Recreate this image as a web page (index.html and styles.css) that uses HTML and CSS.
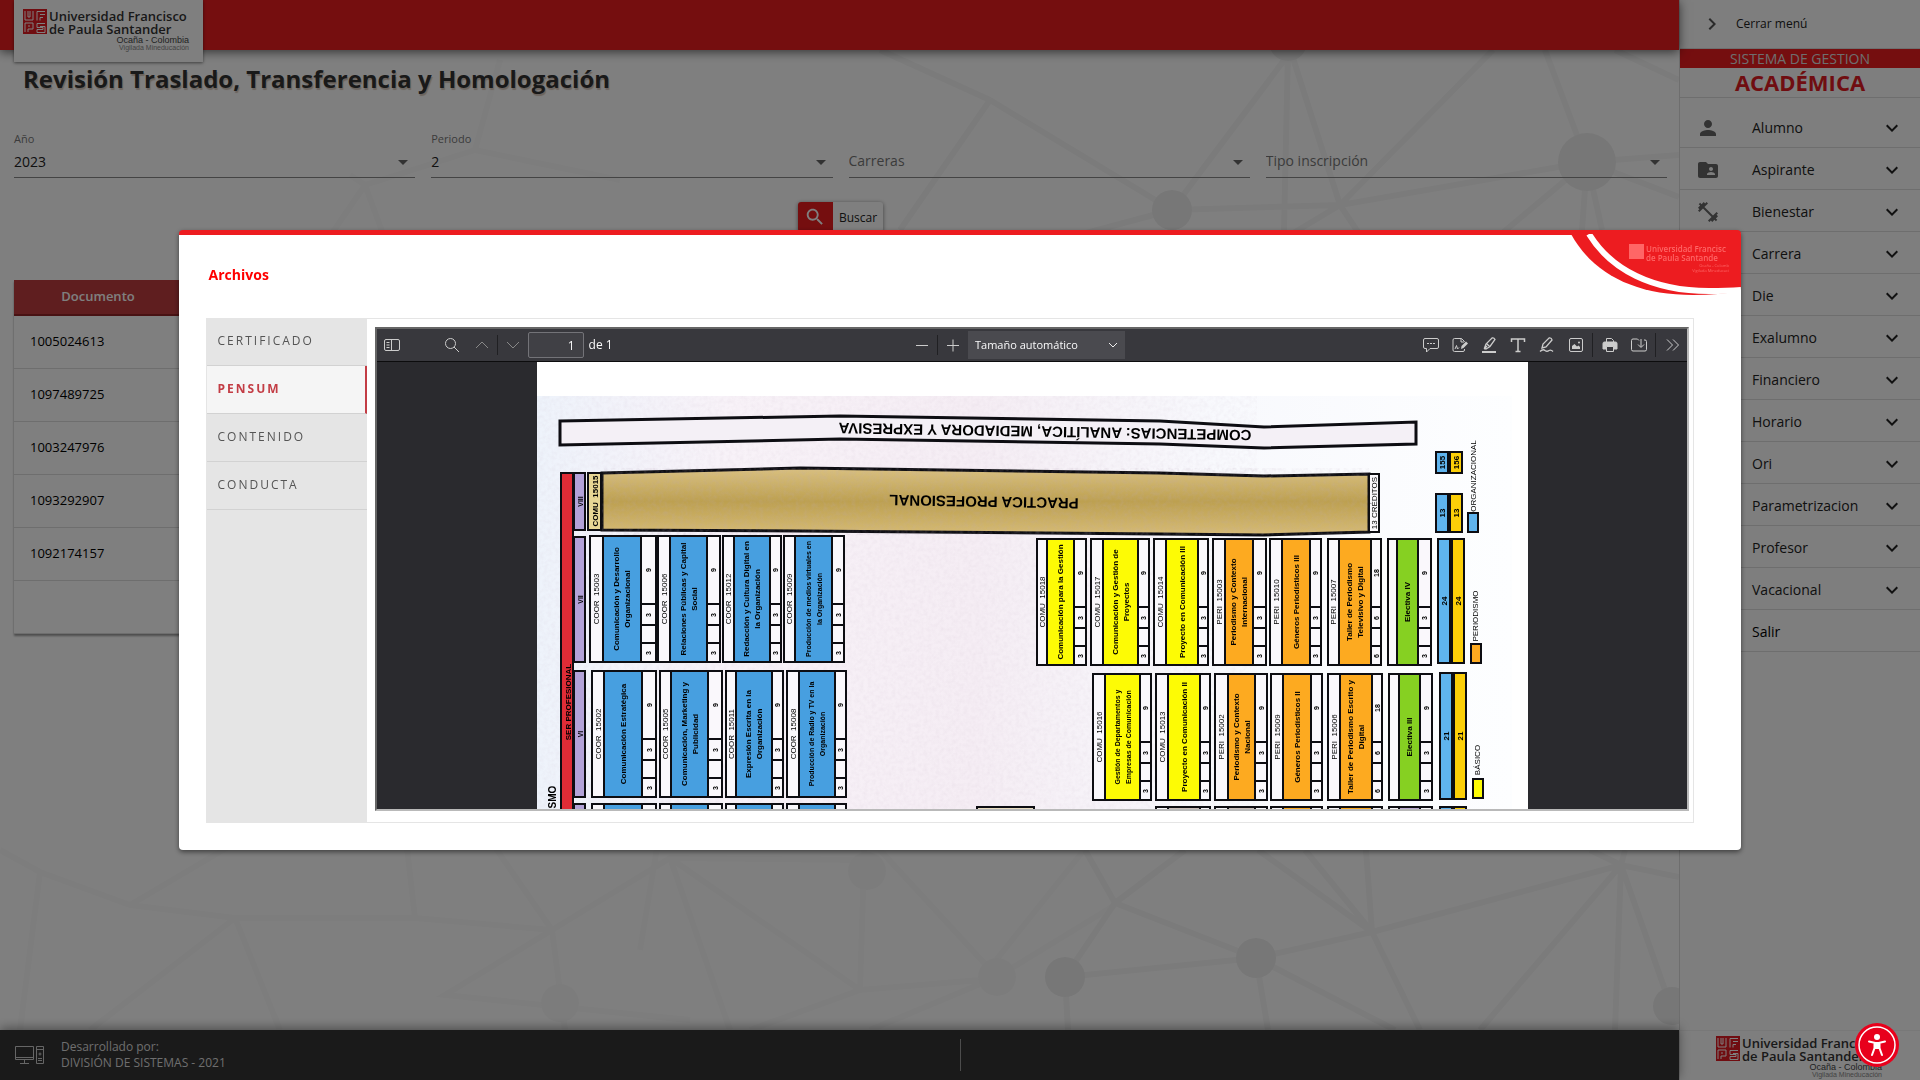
FILE: index.html
```html
<!DOCTYPE html>
<html lang="es">
<head>
<meta charset="utf-8">
<meta name="viewport" content="width=device-width, initial-scale=1">
<title>Revisión Traslado, Transferencia y Homologación</title>
<link rel="stylesheet" href="styles.css">
</head>
<body>
<svg class="defs" aria-hidden="true">
  <symbol id="chevron" viewBox="0 0 24 24"><path d="M16.59 8.59L12 13.17 7.41 8.59 6 10l6 6 6-6z"/></symbol>
  <symbol id="ufps" viewBox="0 0 24 25">
    <rect width="24" height="25" fill="#e01a22"/>
    <path d="M2 2v9h8V2M5 2v6h2V2M22 2.500h-8v9M22 5.500h-5M20 8.500h-3v3M2 23v-9h8v6H5v3M5 17h2M22 14.500h-8v4h6v2h-6v3h8v-6h-5" fill="none" stroke="#fff" stroke-width="1"/>
  </symbol>
</svg>

<div class="app">
  <div class="workspace">
    <svg class="network" viewBox="0 0 1679 1080" preserveAspectRatio="xMidYMid slice" aria-hidden="true">
      <g class="network-soft">
        <path d="M0 850L40 872 130 905 235 918 415 918 552 930 670 858 860 860M40 872L20 1030M130 905L240 840M235 918L280 1030M235 918L90 1030M415 918L405 830M552 930L490 840M552 930L565 1030M552 930L445 995 690 1020M670 858L860 990 980 980 1100 830M670 858L730 1030M860 990L865 830M860 990L750 1030M997 977L880 850M997 977L1115 905M997 977L870 1030M640 950L660 830M350 175L365 185 475 150M365 185L300 280M365 185L400 280M475 150L500 60M475 150L620 180"/>
        <circle cx="867" cy="871" r="19"/><circle cx="997" cy="977" r="19"/><circle cx="560" cy="1003" r="19"/>
      </g>
      <g class="network-strong">
        <path d="M1065 977L1256 958 1372 932 1621 865 1679 877M1115 903L1256 958M1115 903L1185 850M1115 903L1085 850M1065 977L1115 903M1065 977L1068 1030M1256 958L1268 1030M1256 958L1395 1030M1372 932L1258 850M1372 932L1305 850M1372 932L1366 850M1372 932L1420 1030M1621 865L1590 850M1621 865L1625 850M1621 865L1480 1030M1621 865L1615 1030M1621 865L1665 990"/>
        <path d="M1587 162L1545 50M1587 162L1679 155M1587 162L1679 197M1587 162L1582 230M1587 162L1602 230M1587 162L1500 235M1587 162L1340 205 1290 235M1340 205L1493 50M1340 205L1292 55M1340 205L1360 235M1615 50L1679 80M1288 50L1284 230M1172 210L1340 205M1172 210L1288 55M1172 210L990 100M1172 210L1060 240M990 100L880 50M990 100L900 230"/>
        <circle cx="1587" cy="162" r="29"/><circle cx="1288" cy="42" r="19"/><circle cx="1172" cy="210" r="20"/><circle cx="1065" cy="977" r="20"/><circle cx="1256" cy="958" r="20"/><circle cx="1672" cy="1006" r="19"/>
      </g>
    </svg>

    <header class="topbar">
      <a class="brand" href="#" aria-label="Inicio">
        <svg class="logo" viewBox="0 0 170 44">
          <use href="#ufps" width="24" height="25"/>
          <text class="logo-name" x="26" y="12">Universidad Francisco</text>
          <text class="logo-name" x="26" y="25">de Paula Santander</text>
          <text class="logo-place" x="166" y="34">Ocaña - Colombia</text>
          <text class="logo-note" x="166" y="41">Vigilada Mineducación</text>
        </svg>
      </a>
    </header>

    <main class="content">
      <h1>Revisión Traslado, Transferencia y Homologación</h1>
      <form class="filters">
        <div class="field">
          <label for="anio">Año</label>
          <select id="anio"><option>2023</option></select>
        </div>
        <div class="field">
          <label for="periodo">Periodo</label>
          <select id="periodo"><option>2</option></select>
        </div>
        <div class="field">
          <select id="carreras" class="placeholder" aria-label="Carreras"><option>Carreras</option></select>
        </div>
        <div class="field">
          <select id="tipo" class="placeholder" aria-label="Tipo inscripción"><option>Tipo inscripción</option></select>
        </div>
        <button class="search" type="button">
          <span class="search-icon"><svg viewBox="0 0 24 24" aria-hidden="true"><path d="M15.500 14h-.79l-.28-.27C15.410 12.590 16 11.110 16 9.500 16 5.910 13.090 3 9.500 3S3 5.910 3 9.500 5.910 16 9.500 16c1.610 0 3.090-.59 4.230-1.570l.27.28v.79l5 4.990L20.490 19l-4.990-5zm-6 0C7.010 14 5 11.990 5 9.500S7.010 5 9.500 5 14 7.010 14 9.500 11.990 14 9.500 14z"/></svg></span>
          <span class="search-text">Buscar</span>
        </button>
      </form>
      <table class="records">
        <thead><tr><th>Documento</th><th class="rest"></th></tr></thead>
        <tbody>
          <tr><td>1005024613</td><td></td></tr>
          <tr><td>1097489725</td><td></td></tr>
          <tr><td>1003247976</td><td></td></tr>
          <tr><td>1093292907</td><td></td></tr>
          <tr><td>1092174157</td><td></td></tr>
          <tr><td></td><td></td></tr>
        </tbody>
      </table>
    </main>

    <footer class="footer">
      <div class="credits">
        <svg viewBox="0 0 30 20" aria-hidden="true"><path d="M.5 1.500h18v13H.5zM.5 12.500h18M9.500 15v3M5 18.500h9M21.500 1.500h7v17h-7zM21.500 4.500h7M23 15.500h4M23 13.500h4"/><circle cx="25" cy="9" r="1"/></svg>
        <p>Desarrollado por:<br>DIVISIÓN DE SISTEMAS - 2021</p>
      </div>
      <div class="footer-side"></div>
    </footer>
  </div>

  <aside class="sidebar">
    <button class="close-menu" type="button"><svg viewBox="0 0 24 24" aria-hidden="true"><path d="M8.590 16.590L13.170 12 8.590 7.410 10 6l6 6-6 6z"/></svg>Cerrar menú</button>
    <p class="system">SISTEMA DE GESTION</p>
    <p class="module">ACADÉMICA</p>
    <nav class="menu">
      <button type="button"><svg class="lead" viewBox="0 0 24 24"><path d="M12 12c2.210 0 4-1.790 4-4s-1.790-4-4-4-4 1.790-4 4 1.790 4 4 4zm0 2c-2.670 0-8 1.340-8 4v2h16v-2c0-2.660-5.330-4-8-4z"/></svg>Alumno<svg class="more"><use href="#chevron"/></svg></button>
      <button type="button"><svg class="lead" viewBox="0 0 24 24"><path d="M20 6h-8l-2-2H4c-1.100 0-1.990.9-1.990 2L2 18c0 1.100.9 2 2 2h16c1.100 0 2-.9 2-2V8c0-1.100-.9-2-2-2zm-5 3c1.100 0 2 .9 2 2s-.9 2-2 2-2-.9-2-2 .9-2 2-2zm4 8h-8v-1c0-1.330 2.670-2 4-2s4 .67 4 2v1z"/></svg>Aspirante<svg class="more"><use href="#chevron"/></svg></button>
      <button type="button"><svg class="lead" viewBox="0 0 24 24"><path d="M20.570 14.860L22 13.430 20.570 12 17 15.570 8.430 7 12 3.430 10.570 2 9.140 3.430 7.710 2 5.570 4.140 4.140 2.710 2.710 4.140l1.430 1.430L2 7.710l1.430 1.430L2 10.570 3.430 12 7 8.430 15.570 17 12 20.570 13.430 22l1.430-1.430L16.290 22l2.140-2.140 1.430 1.430 1.430-1.430-1.430-1.430L22 16.290z"/></svg>Bienestar<svg class="more"><use href="#chevron"/></svg></button>
      <button type="button"><span class="lead"></span>Carrera<svg class="more"><use href="#chevron"/></svg></button>
      <button type="button"><span class="lead"></span>Die<svg class="more"><use href="#chevron"/></svg></button>
      <button type="button"><span class="lead"></span>Exalumno<svg class="more"><use href="#chevron"/></svg></button>
      <button type="button"><span class="lead"></span>Financiero<svg class="more"><use href="#chevron"/></svg></button>
      <button type="button"><span class="lead"></span>Horario<svg class="more"><use href="#chevron"/></svg></button>
      <button type="button"><span class="lead"></span>Ori<svg class="more"><use href="#chevron"/></svg></button>
      <button type="button"><span class="lead"></span>Parametrizacion<svg class="more"><use href="#chevron"/></svg></button>
      <button type="button"><span class="lead"></span>Profesor<svg class="more"><use href="#chevron"/></svg></button>
      <button type="button"><span class="lead"></span>Vacacional<svg class="more"><use href="#chevron"/></svg></button>
      <button type="button" class="exit"><span class="lead"></span>Salir</button>
    </nav>
    <div class="sidebar-logo">
      <svg class="logo" viewBox="0 0 170 44">
        <use href="#ufps" width="24" height="25"/>
        <text class="logo-name" x="26" y="12">Universidad Francisco</text>
        <text class="logo-name" x="26" y="25">de Paula Santander</text>
        <text class="logo-place" x="166" y="34">Ocaña - Colombia</text>
        <text class="logo-note" x="166" y="41">Vigilada Mineducación</text>
      </svg>
    </div>
  </aside>
</div>

<div class="backdrop">
  <section class="dialog" role="dialog" aria-labelledby="dialog-title">
    <svg class="corner" viewBox="0 0 172 64" aria-hidden="true">
      <path d="M2 0C24 40 66 61 124 61Q150 61 172 57V0z" fill="#ed1c20"/>
      <path d="M20 0C42 36 84 57 140 57Q158 57 172 56" fill="none" stroke="#fff" stroke-width="6"/>
      <g class="corner-logo">
        <rect x="60" y="10" width="15" height="15"/>
        <text x="77" y="18" class="corner-name">Universidad Francisc</text>
        <text x="77" y="27" class="corner-name">de Paula Santande</text>
        <text x="160" y="33" class="corner-note">Ocaña - Colomb</text>
        <text x="160" y="38" class="corner-note">Vigilada Mineducaci</text>
      </g>
    </svg>
    <h2 id="dialog-title">Archivos</h2>
    <div class="files">
      <div class="tabs" role="tablist">
        <button type="button" role="tab">CERTIFICADO</button>
        <button type="button" role="tab" class="active" aria-selected="true">PENSUM</button>
        <button type="button" role="tab">CONTENIDO</button>
        <button type="button" role="tab">CONDUCTA</button>
      </div>
      <div class="viewer">
        <div class="toolbar">
          <div class="tools tools-left">
            <button type="button" class="tool panel" aria-label="Panel lateral"><svg viewBox="0 0 16 16"><path d="M2 2.500h12q1.500 0 1.500 1.500v8q0 1.500-1.500 1.500H2Q.5 13.500.5 12V4Q.5 2.500 2 2.500zM7.500 2.500v11M2.500 5.500h3M2.500 8h3M2.500 10.500h3"/></svg></button>
            <button type="button" class="tool" aria-label="Buscar"><svg viewBox="0 0 16 16"><circle cx="6.500" cy="6.500" r="5"/><path d="M10 10l5 5"/></svg></button>
            <button type="button" class="tool dim" aria-label="Anterior"><svg viewBox="0 0 16 16"><path d="M2 11l6-6 6 6"/></svg></button>
            <span class="sep"></span>
            <button type="button" class="tool dim" aria-label="Siguiente"><svg viewBox="0 0 16 16"><path d="M2 5l6 6 6-6"/></svg></button>
            <input class="page-number" type="text" value="1" aria-label="Página">
            <span class="page-count">de 1</span>
          </div>
          <div class="tools tools-zoom">
            <button type="button" class="tool" aria-label="Reducir"><svg viewBox="0 0 16 16"><path d="M2 8.500h12"/></svg></button>
            <span class="sep"></span>
            <button type="button" class="tool" aria-label="Aumentar"><svg viewBox="0 0 16 16"><path d="M2 8.500h12M8 2.500v12"/></svg></button>
            <span class="scale"><select aria-label="Tamaño"><option>Tamaño automático</option></select><svg viewBox="0 0 16 16" aria-hidden="true"><path d="M4 6l4 4 4-4"/></svg></span>
          </div>
          <div class="tools tools-right">
            <button type="button" class="tool" aria-label="Comentar"><svg viewBox="0 0 16 16"><path d="M2 1.500h12q1.500 0 1.500 1.500v7q0 1.500-1.500 1.500H7l-3.500 3.500v-3.500H2Q.5 11.500.5 10V3Q.5 1.500 2 1.500zM4 6.500h2M7 6.500h2M10 6.500h2"/></svg></button>
            <button type="button" class="tool" aria-label="Firmar"><svg viewBox="0 0 16 16"><path d="M12.500 5V4.500l-3-3H2.500q-1.500 0-1.500 1.500v10q0 1.500 1.500 1.500h8.500q1.500 0 1.500-1.500v-1M9 1.500V5h3M3 12l1.500-3.500 1 3.500 1.500-1.500"/><path d="M9 12l.5-3 4.500-4.500 2 2L11.500 11z" fill="currentColor" stroke="none"/></svg></button>
            <button type="button" class="tool" aria-label="Resaltar"><svg viewBox="0 0 16 16"><path d="M1 15h14" stroke-width="2"/><path d="M3 12l3-3M5 12l-1.500-1 1.500-4 6-6q2-.5 3 1.500l-5 7zM6 7l3 3" stroke-width="1.300"/></svg></button>
            <button type="button" class="tool" aria-label="Texto"><svg viewBox="0 0 16 16"><path d="M1.500 5V2h13v3M8 2v12.500M5.500 14.500h5" stroke-width="1.500"/></svg></button>
            <button type="button" class="tool" aria-label="Dibujar"><svg viewBox="0 0 16 16"><path d="M3 11l1-4 6-6q2.500-.5 3 2l-6 7zM1 14.500q3-3 5-1 2 1.500 4 0 2-1 4 1" stroke-width="1.300"/></svg></button>
            <button type="button" class="tool" aria-label="Imagen"><svg viewBox="0 0 16 16"><rect x="1.500" y="1.500" width="13" height="13" rx="1.500"/><path d="M4 12V9l2.500-2L9 9.500l1.500-1L12 10v2z" fill="currentColor" stroke="none"/><circle cx="11" cy="5.500" r="1" fill="currentColor" stroke="none"/></svg></button>
            <span class="sep"></span>
            <button type="button" class="tool" aria-label="Imprimir"><svg viewBox="0 0 16 16"><path d="M4.500 5V1.500h5l2 2V5M4.500 9.500h7v5h-7z"/><path d="M2.500 5h11Q15 5 15 6.500V12h-3V9H4v3H1V6.500Q1 5 2.500 5z" fill="currentColor"/></svg></button>
            <button type="button" class="tool" aria-label="Guardar"><svg viewBox="0 0 16 16"><path d="M8 3.500L6.500 2H2Q.5 2 .5 3.500v9Q.5 14 2 14h12q1.500 0 1.500-1.500v-8Q15.500 3 14 3h-1M10 2v8M7 7.500l3 3 3-3"/></svg></button>
            <span class="sep"></span>
            <button type="button" class="tool" aria-label="Más"><svg viewBox="0 0 16 16"><path d="M2 2.500L7.500 8 2 13.500M8 2.500L13.500 8 8 13.500"/></svg></button>
          </div>
        </div>
        <div class="sheet">
          <svg id="pensum" viewBox="537 362 991 447" role="img" aria-label="Pensum"></svg>
        </div>
      </div>
    </div>
  </section>
</div>

<button class="accessibility" type="button" aria-label="Accesibilidad">
  <svg viewBox="0 0 44 44"><circle cx="22" cy="22" r="18" fill="none" stroke="#fff" stroke-width="1.500"/><circle cx="22" cy="14" r="3" fill="#fff"/><path d="M14 18.500l5.500 1.200v5.300l-2.500 7M30 18.500l-5.500 1.200v5.300l2.500 7" fill="none" stroke="#fff" stroke-width="2" stroke-linecap="round"/><path d="M19 19h6v7h-6z" fill="#fff"/></svg>
</button>
<script src="pensum.js"></script>
</body>
</html>
```
FILE: styles.css
```css
* { box-sizing: border-box; }

body {
  margin: 0;
  background: #fff;
  color: #222;
  font: 14px/20px "Open Sans", "Noto Sans", sans-serif;
}

button, select, input { font: inherit; color: inherit; }
button { border: 0; background: none; padding: 0; text-align: left; }
h1, h2, p { margin: 0; }
.defs { position: absolute; width: 0; height: 0; }

.app { display: flex; min-height: 100vh; }
.workspace { position: relative; flex: 1; display: flex; flex-direction: column; min-width: 0; }

.network { position: absolute; inset: 0; width: 100%; height: 100%; }
.network path { fill: none; stroke-width: 6; }
.network-soft path { stroke: #fbfbfb; }
.network-soft circle { fill: #f9f9f9; }
.network-strong path { stroke: #f7f7f7; }
.network-strong circle { fill: #efefef; }

.topbar {
  position: relative;
  height: 50px;
  padding-left: 14px;
  background: #ea1c1f;
  box-shadow: 0 2px 10px rgba(0, 0, 0, .6);
}
.brand {
  display: block;
  width: 189px;
  height: 62px;
  padding: 9px 9px 0;
  background: #fff;
  box-shadow: 0 1px 3px rgba(0, 0, 0, .5);
}
.logo { display: block; width: 170px; height: 44px; }
.logo-name { font-size: 13px; font-weight: 600; fill: #333; }
.logo-place { font: 9px "Liberation Sans", sans-serif; fill: #444; text-anchor: end; }
.logo-note { font: 7px "Liberation Sans", sans-serif; fill: #888; text-anchor: end; }

.content { position: relative; flex: 1; padding: 13px 12px 0 14px; }
h1 {
  padding: 0 9px;
  font-size: 24px;
  line-height: 32px;
  font-weight: 700;
  color: #333;
  text-shadow: 1px 2px 1px #d8c8bc;
}

.filters {
  display: grid;
  grid-template-columns: repeat(4, 1fr);
  column-gap: 16px;
  margin-top: 34px;
}
.field {
  position: relative;
  display: flex;
  flex-direction: column;
  justify-content: flex-end;
  height: 49px;
  border-bottom: 1px solid #888;
}
.field label { font-size: 11px; line-height: 20px; color: #777; }
.field select {
  width: 100%;
  height: 30px;
  padding: 0 20px 2px 0;
  border: 0;
  appearance: none;
  background: none;
}
.field::after {
  content: "";
  position: absolute;
  right: 7px;
  bottom: 12px;
  border: 5px solid transparent;
  border-top-color: #666;
  border-bottom: 0;
}
.field .placeholder { color: #777; }
.search {
  grid-column: 1 / -1;
  justify-self: center;
  display: flex;
  height: 30px;
  margin-top: 24px;
  border-radius: 3px;
  overflow: hidden;
  background: #fff;
  box-shadow: 0 1px 4px rgba(0, 0, 0, .5);
}
.search-icon { display: grid; place-items: center; width: 35px; background: #ea1c1f; }
.search-icon svg { width: 22px; height: 22px; fill: #fff; }
.search-text { padding: 0 6px; font-size: 12px; line-height: 32px; }

.records {
  width: 100%;
  margin-top: 48px;
  border-collapse: separate;
  border-spacing: 0;
  table-layout: fixed;
  box-shadow: 0 2px 2px rgba(0, 0, 0, .4);
}
.records th {
  width: 168px;
  height: 36px;
  padding: 0 0 2px;
  background: #be3c3f;
  border-bottom: 2px solid #902526;
  color: #fff;
  font-size: 13px;
  line-height: 20px;
  font-weight: 600;
}
.records th.rest { width: auto; }
.records td { height: 53px; padding: 0 16px 2px; border-bottom: 1px solid #dcdcdc; font-size: 13px; color: #000; }

.footer {
  position: relative;
  display: grid;
  grid-template-columns: 960px 1fr;
  height: 50px;
  padding: 9px 0;
  background: #343434;
  box-shadow: 0 -2px 10px rgba(0, 0, 0, .4);
  color: #ddd;
}
.credits { display: flex; align-items: center; gap: 16px; padding-left: 15px; font-size: 12px; line-height: 16px; }
.credits svg { width: 30px; height: 20px; fill: none; stroke: #ccc; }
.footer-side { border-left: 1px solid #999; }

.sidebar {
  display: flex;
  flex-direction: column;
  flex: 0 0 241px;
  border-left: 1px solid #dcdcdc;
  background: #fcfcfc;
}
.close-menu { display: flex; align-items: center; gap: 12px; height: 49px; padding-left: 20px; font-size: 12px; border-bottom: 1px solid #dcdcdc; }
.close-menu svg { width: 24px; height: 24px; fill: #555; }
.system { background: #ea1c1f; color: #ddd; font-size: 14px; line-height: 19px; text-align: center; }
.module { height: 30px; border-bottom: 1px solid #dcdcdc; color: #e01a22; font-size: 22px; line-height: 28px; font-weight: 700; text-align: center; }
.menu { display: flex; flex-direction: column; padding-top: 8px; }
.menu button { display: flex; align-items: center; height: 42px; padding: 2px 16px 0; border-bottom: 1px solid #dcdcdc; }
.lead { width: 24px; height: 24px; margin-right: 32px; fill: #666; }
.more { width: 24px; height: 24px; margin-left: auto; fill: #222; }
.menu .exit { color: #000; }
.sidebar-logo { height: 50px; margin-top: auto; padding: 5px 0 0 36px; border-top: 1px solid #f0f0f0; }

.backdrop {
  position: fixed;
  inset: 0;
  display: flex;
  align-items: center;
  justify-content: center;
  background: rgba(0, 0, 0, .5);
}
.dialog {
  position: relative;
  width: 81.4vw;
  padding: 28px 47px 27px 27px;
  border-top: 5px solid #ed1c20;
  border-radius: 4px;
  background: #fff;
  box-shadow: 0 2px 5px rgba(0, 0, 0, .5);
}
.corner { position: absolute; top: -1px; right: 0; width: 172px; height: 64px; }
.corner-logo { fill: #f66; }
.corner-name { font-size: 8px; font-weight: 600; }
.corner-note { font-size: 4px; text-anchor: end; }
h2 { font-size: 14px; line-height: 24px; font-weight: 700; color: #f00; padding-left: 3px; }

.files { display: flex; margin-top: 31px; border: 1px solid #e5e5e5; }
.tabs { display: flex; flex-direction: column; flex: 0 0 160px; margin-top: -1px; background: #e5e5e5; }
.tabs button {
  height: 48px;
  padding: 0 0 1px 11px;
  border-bottom: 1px solid #d2d2d2;
  color: #555;
  font-size: 12px;
  letter-spacing: 2px;
}
.tabs .active { background: #f5f5f5; color: #c33d45; font-weight: 700; border-right: 2px solid #c33d45; }

.viewer {
  flex: 1;
  min-width: 0;
  height: 484px;
  margin: 8px 4px 11px 8px;
  border: 2px solid;
  border-color: #666 #b9b9b9 #b9b9b9 #666;
  background: #2a2a2e;
  overflow: hidden;
}
.toolbar {
  display: grid;
  grid-template-columns: 1fr auto 1fr;
  align-items: center;
  height: 33px;
  background: #38383d;
  border-bottom: 1px solid #0c0c0d;
  color: #f9f9fa;
  font-size: 12px;
  line-height: 16px;
}
.tools { display: flex; align-items: center; }
.tool { display: grid; place-items: center; width: 30px; height: 28px; color: #ccc; }
.tool svg, .scale svg { width: 16px; height: 16px; fill: none; stroke: currentColor; stroke-width: 1; }
.tool.dim { color: #888; }
.sep { width: 1px; height: 20px; background: #202023; }
.panel { margin-right: 30px; }
.page-number { width: 56px; height: 26px; margin-right: 5px; padding: 0 8px; border: 1px solid #737378; border-radius: 2px; background: #404045; color: #f9f9fa; text-align: right; }
.tools-zoom { margin-right: 32px; }
.scale { position: relative; display: flex; align-items: center; color: #eee; }
.scale select { width: 157px; height: 28px; padding: 0 24px 0 7px; border: 0; appearance: none; background: #4a4a4f; color: #f9f9fa; font-size: 11px; }
.scale svg { position: absolute; right: 4px; pointer-events: none; }
.tools-right { justify-content: flex-end; }
.tools-right .tool { width: 29px; }
.tools-right .sep { height: 24px; margin: 0 2px; }

.sheet { width: 991px; margin: 0 auto; background: #fff; }
.sheet svg { display: block; width: 991px; height: 447px; font-family: "Liberation Sans", Arial, sans-serif; }
.sheet text { text-anchor: middle; dominant-baseline: central; fill: #000; }
.sheet .heavy { font-weight: 700; }
.ink { stroke: #0d0d12; stroke-width: 2; }
.bar { stroke: #0d0d12; stroke-width: 3; }

.accessibility { position: fixed; right: 21px; bottom: 13px; width: 44px; height: 44px; border-radius: 50%; background: #e8001c; }
.accessibility svg { display: block; width: 44px; height: 44px; }
```
FILE: pensum.js
```js
// Draws the scanned study plan: one column per subject, one row per semester.
const BLUE = '#479fe0', YELLOW = '#fdfb05', ORANGE = '#fdaa20', GREEN = '#86d022', SKY = '#5fb4ee', GOLD = '#fccf08';
const parts = [];

const rect = (x, y, w, h, fill, cls = 'ink') =>
  parts.push(`<rect class="${cls}" x="${x}" y="${y}" width="${w}" height="${h}" fill="${fill}"/>`);
const label = (text, x, y, size, angle = -90, cls = 'heavy') =>
  text && parts.push(`<text class="${cls}" x="${x}" y="${y}" font-size="${size}" transform="rotate(${angle} ${x} ${y})">${text}</text>`);

// left, top, width, height, start and width of the coloured band
function course(x, y, w, h, bandX, bandW, fill, code, lines, size, credits) {
  rect(x, y, w, h, '#faf8fc');
  rect(bandX, y, bandW, h, fill);
  const numX = bandX + bandW, mid = y + h / 2;
  for (const d of [68, 89, 107]) parts.push(`<path class="ink" d="M${numX} ${y + d}H${x + w}"/>`);
  if (!lines) return;
  label(code.replace('  ', '\u00a0\u00a0'), (x + bandX) / 2, mid, 8, -90, '');
  lines.forEach((line, i) => label(line, bandX + bandW / 2 + (i - (lines.length - 1) / 2) * 11, mid, size));
  const nx = (numX + x + w) / 2;
  label(credits[0], nx, y + 34, 7);
  label(credits[1], nx, y + 79, 7);
  label(credits[2], nx, y + 117, 7);
}

parts.push(`<defs>
  <linearGradient id="paper"><stop offset="0" stop-color="#eef3fb"/><stop offset=".2" stop-color="#f8f2f8"/><stop offset=".45" stop-color="#f5edf4"/><stop offset=".7" stop-color="#f8f9fd"/><stop offset="1" stop-color="#fdfeff"/></linearGradient>
  <linearGradient id="gold" x2="0" y2="1"><stop offset="0" stop-color="#d9c080"/><stop offset=".5" stop-color="#bda050"/><stop offset="1" stop-color="#d6bb75"/></linearGradient>
  <filter id="grain" x="0" y="0" width="1" height="1"><feTurbulence type="fractalNoise" baseFrequency=".25" numOctaves="3" seed="4"/><feColorMatrix values="0 0 0 0 .5  0 0 0 0 .4  0 0 0 0 .5  .5 0 0 0 -.18"/></filter>
</defs>`);
rect(537, 396, 975, 420, 'url(#paper)', '');
parts.push('<rect x="537" y="396" width="720" height="413" filter="url(#grain)" opacity=".4"/>');

parts.push('<path class="bar" fill="#f4f0f6" d="M560 421L840 416 1160 421 1264 427 1416 422V444L1264 448 1160 444 840 439 560 445z"/>');
label('COMPETENCIAS: ANALÍTICA, MEDIADORA Y EXPRESIVA', 1045, 432, 15, 181);

parts.push('<path class="bar" fill="url(#gold)" d="M602 473L800 468 1160 473 1264 476 1369 474V532L1264 535 1160 534 800 531 602 530z"/>');
parts.push('<path d="M602 473L800 468 1160 473 1264 476 1369 474V532L1264 535 1160 534 800 531 602 530z" filter="url(#grain)" opacity=".7"/>');
label('PRACTICA PROFESIONAL', 984, 502, 15, 181);
rect(588, 473, 13, 57, '#e8d795');
label('COMU\u00a0 15015', 595, 501, 8);
rect(1369, 474, 10, 58, '#faf8fc');
label('13 CRÉDITOS', 1374, 503, 8, -90, '');

rect(561, 473, 12, 350, '#e02c36');
label('SER PROFESIONAL', 568, 702, 8);
[['VIII', 473, 57], ['VII', 537, 125], ['VI', 671, 126], ['', 804, 126]].forEach(([t, y, h]) => {
  rect(574, y, 11, h, '#b3a2d8');
  label(t, 580, y + h / 2, 7);
});
label('SMO', 552, 797, 10);

const T = ['9', '3', '3'], L = ['18', '6', '6'];
const rows = [
  { y: 536, dx: 0, items: [
    [590, 66, 603, 38, BLUE, 'COOR  15003', ['Comunicación y Desarrollo', 'Organizacional'], 8, T],
    [658, 62, 670, 37, BLUE, 'COOR  15006', ['Relaciones Públicas y Capital', 'Social'], 8, T],
    [723, 58, 734, 36, BLUE, 'COOR  15012', ['Redacción y Cultura Digital en', 'la Organización'], 8, T],
    [784, 60, 795, 37, BLUE, 'COOR  15009', ['Producción de medios virtuales en', 'la Organización'], 7, T],
    [1037, 49, 1047, 27, YELLOW, 'COMU  15018', ['Comunicación para la Gestión'], 8, T],
    [1091, 58, 1103, 35, YELLOW, 'COMU  15017', ['Comunicación y Gestión de', 'Proyectos'], 8, T],
    [1154, 54, 1166, 32, YELLOW, 'COMU  15014', ['Proyecto en Comunicación III'], 8, T],
    [1213, 53, 1225, 28, ORANGE, 'PERI  15003', ['Periodismo y Contexto', 'Internacional'], 8, T],
    [1270, 51, 1282, 28, ORANGE, 'PERI  15010', ['Géneros Periodísticos III'], 8, T],
    [1328, 53, 1339, 32, ORANGE, 'PERI  15007', ['Taller de Periodismo', 'Televisivo y Digital'], 8, L],
    [1388, 43, 1397, 21, GREEN, '', ['Electiva IV'], 8, T]] },
  { y: 671, dx: 2, items: [
    [590, 64, 602, 38, BLUE, 'COOR  15002', ['Comunicación Estratégica'], 8, T],
    [658, 62, 669, 37, BLUE, 'COOR  15005', ['Comunicación, Marketing y', 'Publicidad'], 8, T],
    [724, 57, 734, 36, BLUE, 'COOR  15011', ['Expresión Escrita en la', 'Organización'], 8, T],
    [785, 59, 797, 36, BLUE, 'COOR  15008', ['Producción de Radio y TV en la', 'Organización'], 7, T],
    [1091, 58, 1103, 35, YELLOW, 'COMU  15016', ['Gestión de Departamentos y', 'Empresas de Comunicación'], 7, T],
    [1154, 54, 1166, 32, YELLOW, 'COMU  15013', ['Proyecto en Comunicación II'], 8, T],
    [1213, 52, 1226, 27, ORANGE, 'PERI  15002', ['Periodismo y Contexto', 'Nacional'], 8, T],
    [1269, 51, 1281, 28, ORANGE, 'PERI  15009', ['Géneros Periodísticos  II'], 8, T],
    [1326, 54, 1338, 32, ORANGE, 'PERI  15006', ['Taller de Periodismo Escrito y', 'Digital'], 8, L],
    [1387, 43, 1397, 21, GREEN, '', ['Electiva III'], 8, T]] },
  { y: 804, dx: 2, items: [
    [590, 64, 602, 38, BLUE], [658, 62, 669, 37, BLUE], [724, 57, 734, 36, BLUE], [785, 59, 797, 36, BLUE],
    [1154, 54, 1166, 32, '#c9bdb8'], [1213, 52, 1226, 27, '#c9bdb8'], [1269, 51, 1281, 28, ORANGE], [1326, 54, 1338, 32, ORANGE], [1387, 43, 1397, 21, '#b9a8cf']] }
];
for (const row of rows)
  for (const [x, w, bx, bw, ...rest] of row.items)
    course(x + row.dx, row.y + (x > 1000 ? 3 : 0), w, 126, bx + row.dx, bw, ...rest);
rect(977, 807, 57, 20, '#e8dcc0');

[[452, 21, '155', '156', 0], [494, 38, '13', '13', 0], [539, 124, '24', '24', 2], [673, 126, '21', '21', 4], [807, 20, '', '', 4]].forEach(([y, h, a, b, dx]) => {
  rect(1436 + dx, y, 12, h, SKY);
  rect(1450 + dx, y, 12, h, GOLD);
  label(a, 1442 + dx, y + h / 2, 8);
  label(b, 1456 + dx, y + h / 2, 8);
});
rect(1468, 513, 10, 19, SKY);
label('ORGANIZACIONAL', 1473, 476, 8, -90, '');
rect(1471, 644, 10, 19, ORANGE);
label('PERIODISMO', 1475, 616, 8, -90, '');
rect(1473, 779, 10, 19, YELLOW);
label('BÁSICO', 1477, 760, 8, -90, '');

document.getElementById('pensum').innerHTML = parts.join('');
```
